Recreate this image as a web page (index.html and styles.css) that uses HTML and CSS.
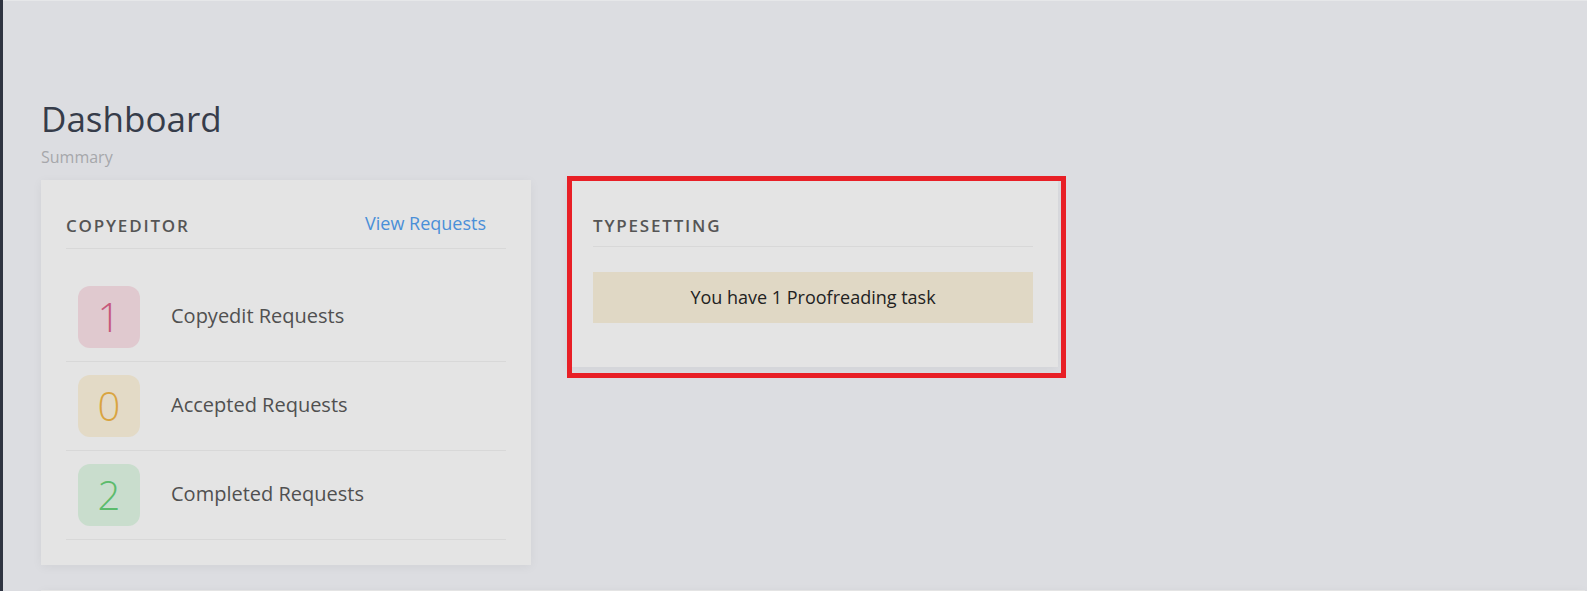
FILE: index.html
```html
<!DOCTYPE html>
<html lang="en">
<head>
<meta charset="utf-8">
<title>Dashboard</title>
<link rel="stylesheet" href="styles.css">
</head>
<body>
<div class="app">
  <div class="sidebar"></div>
  <main class="main">
    <h1 class="page-title">Dashboard</h1>
    <div class="page-subtitle">Summary</div>
    <div class="cards">
      <section class="card">
        <div class="card-header">
          <h2 class="card-title">Copyeditor</h2>
          <a class="card-link" href="#">View Requests</a>
        </div>
        <ul class="stat-list">
          <li class="stat-row">
            <span class="badge badge-pink">1</span>
            <span class="stat-label">Copyedit Requests</span>
          </li>
          <li class="stat-row">
            <span class="badge badge-orange">0</span>
            <span class="stat-label">Accepted Requests</span>
          </li>
          <li class="stat-row">
            <span class="badge badge-green">2</span>
            <span class="stat-label">Completed Requests</span>
          </li>
        </ul>
      </section>
      <section class="card card-highlight">
        <div class="card-header">
          <h2 class="card-title">Typesetting</h2>
        </div>
        <div class="alert">You have 1 Proofreading task</div>
        <div class="highlight-frame"></div>
      </section>
    </div>
    <section class="card card-wide"></section>
  </main>
</div>
</body>
</html>
```
FILE: styles.css
```css
* { box-sizing: border-box; }
html, body {
  margin: 0;
  height: 100%;
  overflow: hidden;
}
body {
  background: #dcdde1;
  font-family: "Open Sans", "Noto Sans", sans-serif;
  color: #555;
}
.app {
  display: flex;
  min-height: 100vh;
}
.sidebar {
  width: 3px;
  flex: 0 0 3px;
  background: #2f3441;
}
.main {
  flex: 1;
  border-top: 1px solid #e6e7e9;
  padding: 97px 0 0 38px;
}
.page-title {
  margin: 0;
  font-size: 35px;
  line-height: 41px;
  font-weight: 500;
  color: #363c4a;
}
.page-subtitle {
  margin-top: 9px;
  font-size: 16px;
  line-height: 19px;
  font-weight: 500;
  color: #a6a7ab;
}
.cards {
  display: flex;
  align-items: flex-start;
  gap: 37px;
  margin-top: 13px;
}
.card {
  position: relative;
  width: 490px;
  padding: 25px;
  background: #e4e4e4;
  box-shadow: 0 2px 10px rgba(0, 0, 0, 0.05);
}
.card-header {
  display: flex;
  justify-content: space-between;
  align-items: flex-start;
  padding: 9px 0 8px;
  border-bottom: 1px solid #d8d8d8;
}
.card-title {
  margin: 0;
  font-size: 17px;
  line-height: 24px;
  font-weight: 600;
  letter-spacing: 1.8px;
  text-transform: uppercase;
  color: #555;
}
.card-link {
  margin-top: -3px;
  padding-bottom: 5px;
  margin-right: 20px;
  font-size: 18px;
  line-height: 24px;
  color: #4a8fd8;
  text-decoration: none;
}
.stat-list {
  list-style: none;
  margin: 24px 0 0;
  padding: 0;
}
.stat-row {
  display: flex;
  align-items: center;
  gap: 31px;
  padding: 13px 0 13px 12px;
  border-bottom: 1px solid #d8d8d8;
}
.badge {
  width: 62px;
  height: 62px;
  border-radius: 12px;
  display: flex;
  align-items: center;
  justify-content: center;
  font-size: 40px;
  font-weight: 350;
  line-height: 1;
}
.badge-pink { background: #e0c9cf; color: #c6587b; }
.badge-orange { background: #e3dac6; color: #d9a440; }
.badge-green { background: #c9ddcd; color: #5cbb6c; }
.stat-label {
  padding-bottom: 3px;
  font-size: 20px;
  font-weight: 500;
  color: #505050;
}
.alert {
  margin: 25px 0 19px;
  padding: 13px;
  background: #e0d8c5;
  color: #222;
  font-size: 18px;
  line-height: 25px;
  text-align: center;
}
.highlight-frame {
  position: absolute;
  top: -4px;
  left: -1px;
  right: -8px;
  bottom: -11px;
  border: 5px solid #e81f26;
  pointer-events: none;
}
.card-wide {
  width: auto;
  height: 200px;
  margin-top: 25px;
  margin-right: 2px;
}
```
